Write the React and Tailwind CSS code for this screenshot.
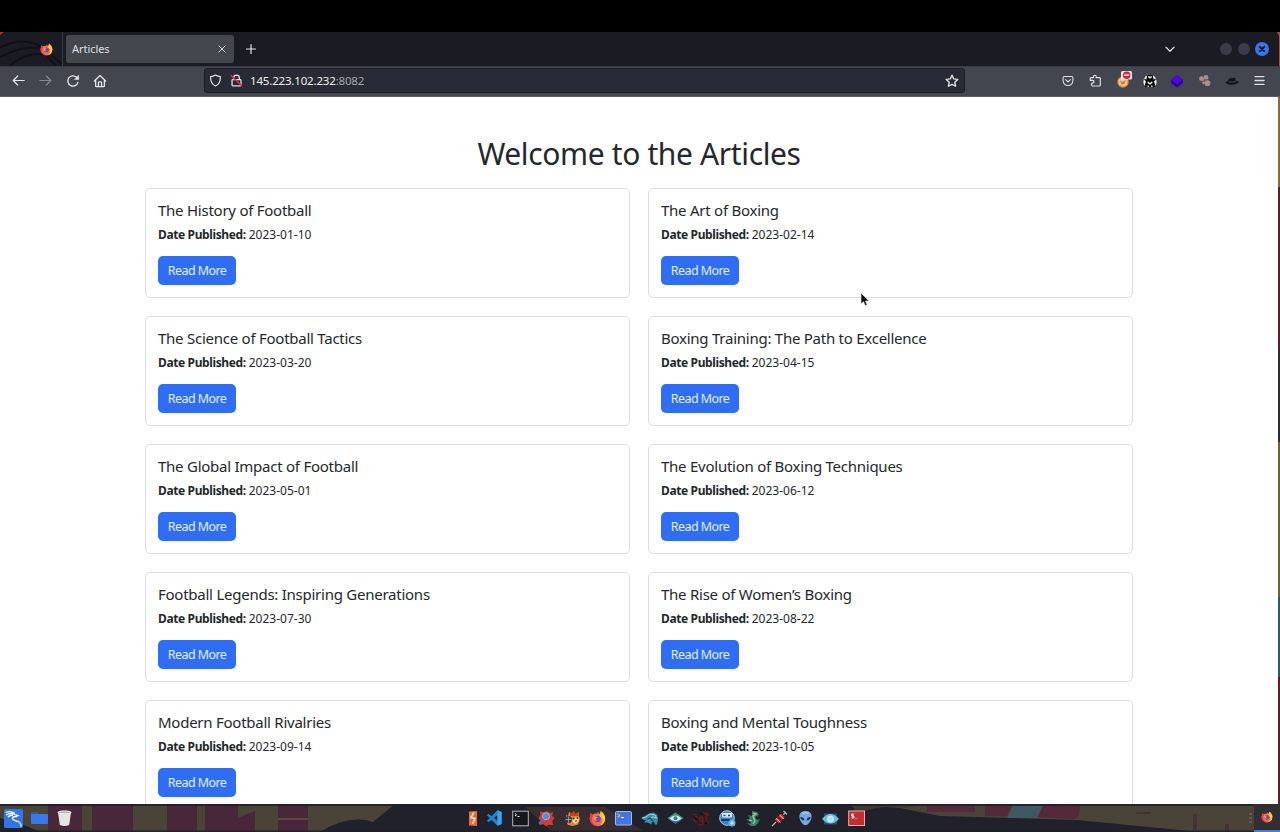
import React from "react";

const articles = [
  ["The History of Football", "2023-01-10"],
  ["The Art of Boxing", "2023-02-14"],
  ["The Science of Football Tactics", "2023-03-20"],
  ["Boxing Training: The Path to Excellence", "2023-04-15"],
  ["The Global Impact of Football", "2023-05-01"],
  ["The Evolution of Boxing Techniques", "2023-06-12"],
  ["Football Legends: Inspiring Generations", "2023-07-30"],
  ["The Rise of Women’s Boxing", "2023-08-22"],
  ["Modern Football Rivalries", "2023-09-14"],
  ["Boxing and Mental Toughness", "2023-10-05"],
];

function Firefox({ className }) {
  return (
    <svg viewBox="0 0 16 16" className={className}>
      <path d="M8 1.4c1 .9 1.5 1.6 1.8 2.5 1-.2 1.3-1.600.9-2.900 2.700 1.300 4.600 4.300 4.500 7.200A7.200 7.200 0 1 1 1.300 5.200L1.800 2.900l1.600 1.500C4.500 3.600 6 3 8 3.500z" fill="#ff7139" />
      <path d="M10.700 1c2.700 1.300 4.600 4.300 4.500 7.200a7.200 7.200 0 0 1-5 6.700C13 12.500 13 9.500 11.700 7.500 11 6 9.500 5.500 9.800 3.900c1-.2 1.300-1.600.9-2.900z" fill="#ffc83d" />
      <path d="M1.200 5.300A7.200 7.200 0 0 0 10 15c-3-.2-6.500-1.700-7.200-5-.4-2 .2-3.500 1.200-4.600L1.800 2.900z" fill="#f0355b" />
      <circle cx="7.900" cy="8.500" r="3.100" fill="#6a45c9" />
      <path d="M4.500 6.200c1.700-.5 2.900.2 4 .6-.8.400-1.600.4-2 1.300-.3 1 .4 1.700 1.500 1.900-2 .9-4-.8-3.500-3.800z" fill="#ff9a3b" />
    </svg>
  );
}

const line = { fill: "none", stroke: "currentColor", strokeLinecap: "round", strokeLinejoin: "round" };

function LineIcon({ d, className, width = 1.3 }) {
  return (
    <svg viewBox="0 0 16 16" className={className} {...line} strokeWidth={width}>
      <path d={d} />
    </svg>
  );
}

function TabBar() {
  return (
    <div className="relative flex h-[34px] items-center bg-[#1b1c23]">
      <div className="relative flex h-full w-[63px] items-center justify-end overflow-hidden border-r border-[#3a3b42] pr-[9.500px]">
        <svg viewBox="0 0 62 34" className="absolute inset-0 h-full w-full" fill="none" stroke="#101116" strokeWidth="2">
          <path d="M0 15C15 8 28 8 40 14L62 32M0 25C18 16 30 14 42 17M10 34C20 24 35 20 44 23M36 12L56 34" />
          <path d="M0 0H4L0 3Z" fill="#b33126" stroke="none" />
        </svg>
        <Firefox className="relative h-[13px] w-[13px]" />
      </div>
      <div className="ml-[3px] flex h-7 w-[168px] items-center justify-between rounded-[3px] bg-[#45474f] pr-[7px] pl-[6px]">
        <span className="font-['Noto_Sans',sans-serif] text-[11px] tracking-[-0.05px] text-[#dedfe2]">Articles</span>
        <LineIcon className="h-[10px] w-[10px] text-[#d0d1d5]" width={1.6} d="M3 3l10 10M13 3L3 13" />
      </div>
      <LineIcon className="ml-[11px] h-3 w-3 text-[#e4e4e8]" width={1.6} d="M8 2v12M2 8h12" />
      <LineIcon className="ml-auto h-3 w-3 text-[#e4e4e8]" width={1.7} d="M2.500 5.500L8 11l5.500-5.500" />
      <div className="ml-[44px] flex items-center gap-[6px] pr-[11.500px]">
        <i className="block h-3 w-3 rounded-full bg-[#3a3c4a]" />
        <i className="block h-3 w-3 rounded-full bg-[#3a3c4a]" />
        <svg viewBox="0 0 14 14" className="-ml-[1px] h-[14px] w-[14px]">
          <circle cx="7" cy="7" r="7" fill="#3a74ee" />
          <path d="M4.800 4.800l4.400 4.400M9.200 4.800L4.800 9.200" stroke="#10131f" strokeWidth="1.900" strokeLinecap="round" />
        </svg>
      </div>
      <svg viewBox="0 0 3 34" className="absolute top-0 right-0 h-full w-[3px]">
        <path d="M0 0H3V34H2V4Z" fill="#b24a3e" />
      </svg>
    </div>
  );
}

function Extensions() {
  return (
    <div className="flex items-center text-[#dfe0e4]">
      <svg viewBox="0 0 16 16" className="h-[12px] w-[12px]" {...line} strokeWidth="1.400">
        <path d="M3 2h10a1.500 1.500 0 0 1 1.500 1.500v4a6.500 6.500 0 0 1-13 0v-4A1.500 1.500 0 0 1 3 2zM4.800 6.200L8 9.300l3.200-3.100" />
      </svg>
      <svg viewBox="0 0 16 16" className="ml-[15px] h-[13px] w-[13px]" {...line} strokeWidth="1.400">
        <path d="M5.500 4.500V3.300a1.700 1.700 0 0 1 3.400 0v1.200h4a1 1 0 0 1 1 1v8.200a1 1 0 0 1-1 1H4.200a1 1 0 0 1-1-1v-2.600h1.300a1.600 1.600 0 0 0 0-3.200H1.600V5.500a1 1 0 0 1 1-1z" />
      </svg>
      <svg viewBox="0 0 16 18" className="-mt-[2px] ml-[14px] h-[18px] w-4">
        <circle cx="7" cy="11" r="5.800" fill="#c98c52" />
        <path d="M2.500 9l4-3.500 5 3.500-.5 5-4 1.500-4-2z" fill="#f0c98a" />
        <path d="M4 9.500l2.500 1.500L10 9l-1.500 4-3 .5z" fill="#cf7e38" />
        <rect x="5" y="0" width="11" height="8.500" rx="1.500" fill="#f2e7ea" />
        <circle cx="10.700" cy="4.200" r="3.800" fill="#c92843" />
        <path d="M8.300 4.200h4.800" stroke="#fff" strokeWidth="1.500" />
      </svg>
      <svg viewBox="0 0 14 14" className="ml-[11px] h-[14px] w-[14px]">
        <path d="M4.500 1.200C1.200 2.500-.3 6.500.8 10.300L3 13l1-3.500zM9.500 1.200c3.300 1.300 4.800 5.300 3.700 9.100L11 13l-1-3.500z" fill="#f0f0f2" />
        <path d="M4.500 1h5l1 3.500L12 13H2l1.500-8.500z" fill="#08090b" />
        <path d="M5.300 1.700l1.700 1 1.700-1v1.900L7 4.800 5.300 3.600zM4.500 7L7 9l2.500-2v2L7 10.800 4.500 9zM4.500 11.500h1.300V13H4.500zM8.200 11.500h1.300V13H8.200z" fill="#eeeeef" />
        <path d="M1.500 5L4 7.500 2.500 11M12.500 5L10 7.500l1.500 3.500" stroke="#060607" strokeWidth="1.200" fill="none" />
      </svg>
      <svg viewBox="0 0 14 14" className="ml-[13px] h-[14px] w-[14px]">
        <path d="M7 1l6 5v3l-6 4.500L1 9V6z" fill="#2a05a0" />
        <path d="M7 1l6 5-6 4.200L1 6z" fill="#4c0bd0" />
      </svg>
      <svg viewBox="0 0 14 14" className="ml-[14px] h-[13px] w-[13px]">
        <path d="M4 4.500l5.500 5.500M9.600 4v6" stroke="#76585f" strokeWidth="3" />
        <g fill="#a78c91"><circle cx="3.800" cy="5" r="2.600" /><circle cx="8.600" cy="3.500" r="2.500" /><circle cx="10.200" cy="10" r="3.200" /><circle cx="6" cy="9.500" r="1.500" /></g>
      </svg>
      <svg viewBox="0 0 14 14" className="ml-[14px] h-[14px] w-[14px]">
        <path d="M.3 8.500C1.500 7.500 3 7.600 3.700 5.200 4.200 3.500 5.500 4.300 7 3.900c1.500-.3 3-.7 3.300 1.200l.4 1.900c1.500-.3 2.800.3 3.100 1.300-2.500 3-10.300 3.500-13.500.2z" fill="#131417" />
        <path d="M3.600 7.300c2 1.200 5 1.200 7.200-.2" stroke="#55575e" strokeWidth=".8" fill="none" />
      </svg>
      <LineIcon className="ml-[14px] h-[13px] w-[13px]" width={1.7} d="M2.500 3.200h11M2.500 8h11M2.500 12.800h11" />
    </div>
  );
}

function NavBar() {
  return (
    <div className="flex h-[31px] items-center border-t border-b border-t-[#383a42] border-b-[#5b5d64] bg-[#43464f] pr-[14px] pb-[2px] pl-[12px]">
      <div className="flex w-[192px] items-center text-[#e6e6e9]">
        <LineIcon className="h-[13px] w-[13px]" width={1.500} d="M15 8H1.500M7 2.500L1.500 8 7 13.500" />
        <LineIcon className="ml-[14px] h-[13px] w-[13px] text-[#85878e]" width={1.500} d="M1 8h13.500M9 2.500L14.500 8 9 13.500" />
        <svg viewBox="0 0 16 16" className="ml-[14px] h-[14px] w-[14px]" {...line} strokeWidth="1.500">
          <path d="M13.700 9.500a5.900 5.900 0 1 1-1.500-5.700L14 5.500" />
          <path d="M14.500 1.500v4.800H9.700z" fill="currentColor" strokeWidth=".5" />
        </svg>
        <svg viewBox="0 0 16 16" className="ml-[13px] h-[14px] w-[14px]" {...line} strokeWidth="1.500">
          <path d="M1.500 8L8 1.800 14.500 8M3 7v6.500a1 1 0 0 0 1 1h8a1 1 0 0 0 1-1V7M6.200 14.300V10a1 1 0 0 1 1-1h1.600a1 1 0 0 1 1 1v4.300" />
        </svg>
      </div>
      <div className="flex h-[25px] w-[761px] items-center rounded-[3px] border border-[#1b1c24] bg-[#282a35] pr-[5px] pl-[4px] text-[#dfe0e4]">
        <LineIcon className="h-[13px] w-[13px]" width={1.500} d="M8 1.200c2 1.300 4 1.900 6 2 .3 5.500-1.600 9.500-6 11.600-4.400-2.100-6.300-6.100-6-11.600 2-.1 4-.7 6-2z" />
        <svg viewBox="0 0 16 16" className="ml-2 h-[13px] w-[13px]" {...line} strokeWidth="1.600">
          <path d="M4.500 7V5a3.500 3.500 0 0 1 7 0v2M3.500 7h9a1 1 0 0 1 1 1v5.500a1 1 0 0 1-1 1h-9a1 1 0 0 1-1-1V8a1 1 0 0 1 1-1z" />
          <path d="M1.500 2l13 12.500" stroke="#e22850" strokeWidth="1.900" />
        </svg>
        <span className="ml-[7px] font-['Noto_Sans',sans-serif] text-[11.500px] tracking-[-0.170px] text-[#f0f0f2]">
          145.223.102.232<span className="text-[#a4a6ac]">:8082</span>
        </span>
        <LineIcon className="ml-auto h-[14px] w-[14px]" width={1.600} d="M8 1.400l2 4.200 4.600.6-3.400 3.200.9 4.600L8 11.800 3.900 14l.9-4.600L1.400 6.200 6 5.600z" />
      </div>
      <div className="ml-auto"><Extensions /></div>
    </div>
  );
}

function Card({ title, date }) {
  return (
    <article className="h-[110px] rounded-[5px] border border-[#dcdddf] bg-white px-[12px] pt-[11px]">
      <h2 className="text-[15px] leading-[20px] tracking-[-0.250px] whitespace-nowrap">{title}</h2>
      <p className="mt-[6px] flex gap-[3px] text-[12px] leading-[18px] whitespace-nowrap">
        <strong className="font-bold tracking-[-0.380px]">Date Published:</strong> <span>{date}</span>
      </p>
      <button className="mt-[12px] flex h-[29px] w-[78px] items-center justify-center rounded-[5px] bg-[#2f6df3] pt-px text-[12.500px] tracking-[-0.580px] text-[#e6eefe]">
        Read More
      </button>
    </article>
  );
}

function VsCode() {
  return (
    <svg viewBox="0 0 16 16" className="h-4 w-4">
      <path d="M11.500.3L15.600 2v12l-4.100 1.700L1 5.200l1.500-1.400 9 6.900V5.300l-9 6.900L1 10.800z" fill="#2383cf" />
      <path d="M11.500.3L15.600 2v12l-4.100 1.700z" fill="#35a5ef" />
    </svg>
  );
}

function Dock() {
  const s = "h-[17px] w-[17px]";
  return (
    <div className="flex items-center gap-[8.900px]">
      <svg viewBox="0 0 17 17" className="-mr-[3.500px] h-[17px] w-[17px]">
        <path d="M5 1.500l8-.5v15l-8-.5z" fill="#ee6b32" />
        <path d="M9.800 2.500L7 7.500l4 1L8.500 14" stroke="#fff" strokeWidth="1.300" fill="none" />
      </svg>
      <div className="flex w-[17px] justify-center"><VsCode /></div>
      <svg viewBox="0 0 17 17" className={s}>
        <rect x=".7" y="1.200" width="15.600" height="14.600" fill="#17181b" stroke="#b4b6ba" />
        <path d="M3 3.500l1.500 1.300L3 6M5.500 6.500h2" stroke="#fff" fill="none" />
      </svg>
      <svg viewBox="0 0 17 17" className={s}>
        <path d="M2 1.500l4 .8L9 1l3 2 3-1-.8 4 2.300 2-2.200 3 .7 4-4-.3L8 16l-3-1.700-3.500 1L2.500 11 .5 8l2-3z" fill="#d43c32" />
        <circle cx="8" cy="6.300" r="3.500" fill="#5a86d8" stroke="#a3b6dd" />
        <path d="M5.500 9L1 13.500" stroke="#4372cc" strokeWidth="2" />
      </svg>
      <svg viewBox="0 0 17 17" className={s}>
        <path d="M2 5l2 1 1-4 3 2 1.500-3 2 3L15 2l-.2 4 1.200 3-2 5.500-5 1.500-5-1-2-4z" fill="#e8862e" />
        <path d="M6 2l2 2 1.500-3 2 3L15 2l-1 4H6z" fill="#cf3929" />
        <path d="M10 8l5-1-.5 5-3.500 2-3-3z" fill="#f7d7a0" />
        <circle cx="4.500" cy="9.500" r="3.500" fill="#323843" /><path d="M1.500 9.500h6M4.500 6.500v6" stroke="#a9b1ba" strokeWidth=".8" />
        <circle cx="9.700" cy="8.500" r=".9" fill="#33211d" /><circle cx="13.500" cy="8" r=".9" fill="#33211d" /><path d="M11 11h2" stroke="#4c271c" />
      </svg>
      <Firefox className={s} />
      <svg viewBox="0 0 17 17" className={s}>
        <rect x=".5" y="1.500" width="16" height="13.500" rx="1" fill="#4674df" stroke="#9db9f3" />
        <path d="M2.800 4l2 1.500-2 1.500M6 7.500h3" stroke="#fff" fill="none" />
      </svg>
      <svg viewBox="0 0 17 17" className={s}>
        <path d="M0 8l4-2 3-2 5-1.500 4 2 1 4-1 6h-2l-1-3-2 1-1 2-3-2H3l2-2-3-1z" fill="#3f8eab" />
        <path d="M1 8l4-1 4-3 5 1 1.500 3-3-1-3 1-3 3" stroke="#9bd4df" fill="none" /><path d="M6 10l3-2 3 3" stroke="#15455f" fill="none" strokeWidth="1.300" />
      </svg>
      <svg viewBox="0 0 17 17" className={s}>
        <path d="M.5 8.500L8.500 14l8-5.500-8-2z" fill="#3c68b5" /><path d="M.5 8L8.500 2.500l8 5.500-8 3.500z" fill="#3a9b7b" />
        <path d="M2.500 8.500q6-6 12 0-6 5-12 0z" fill="#dcebe6" /><circle cx="8.500" cy="8.300" r="2" fill="#3c7c92" />
      </svg>
      <svg viewBox="0 0 17 17" className={s} fill="none" stroke="#711719" strokeWidth="1.700">
        <path d="M.5 4l3 1M5 7c-4-1-6 5-1 5M9.800 7c-4-1-4 5 0 4V7v7c-1 1.500-4 1.200-4 0M13.500 2v9.500L16 13M10 3l6 2" />
        <path d="M1 7l3 3M8 3l2 2M12 14l2-2" stroke="#111217" />
      </svg>
      <svg viewBox="0 0 17 17" className={s}>
        <circle cx="8" cy="8" r="7.300" fill="#3383c6" stroke="#a9cde8" />
        <rect x="3" y="3" width="10" height="4.500" rx="1" fill="#d9edf8" /><path d="M4.500 5.500h2M9 5.500h2" stroke="#173e77" strokeWidth="1.500" />
        <path d="M2 10h9" stroke="#133975" strokeWidth="2" /><circle cx="13" cy="13" r="3.500" fill="#68b3e6" /><path d="M11.500 13h3M13 11.500v3" stroke="#e4f5ff" />
      </svg>
      <svg viewBox="0 0 17 17" className={s}>
        <path d="M7 1l5 1 2 3-4 2 2 3 3-1-2 4-3 3H6l-4-3 4 .5-1-2-4-2 4-.5L3 5l4 1z" fill="#3e8067" />
        <path d="M8 3l3 1-3 2 2 5-2 3M4 10l3 1" stroke="#9ccaa3" strokeWidth="1.300" fill="none" /><path d="M12 7l2-3M5 7L3 6" stroke="#275449" />
      </svg>
      <svg viewBox="0 0 17 17" className={s}>
        <path d="M1 16l4.500-4.500M11.500 5.500L15 2M12.500 1l3.500 3.500" stroke="#b5b2b5" strokeWidth="1.300" />
        <path d="M3 9.500l7-6.500L14.500 7l-7 7z" fill="#c52930" stroke="#291b20" /><path d="M5 8.500l4.500 4M8.500 5l4.500 4" stroke="#e8cdd0" /><path d="M7 7l3 3" stroke="#2b1a1e" strokeWidth="1.500" />
      </svg>
      <svg viewBox="0 0 17 17" className={s}>
        <path d="M8.500 1c8 0 7 8 3.500 12-2.500 3-4.500 3-7 0C1.500 9 .5 1 8.500 1z" fill="#78a9dc" />
        <path d="M3.300 7c3 0 4 1.500 4 3.500-2.500 0-3.700-1.300-4-3.500zM13.700 7c-3 0-4 1.500-4 3.500 2.500 0 3.700-1.300 4-3.500z" fill="#172c61" />
        <path d="M5.500 3.500q3-2 6 0" stroke="#bcdaf5" fill="none" />
      </svg>
      <svg viewBox="0 0 17 17" className={s}>
        <rect x="2" y="3.500" width="13" height="11" rx="1" fill="#225677" /><path d="M0 9q8.500-10 17 0-8.500 9-17 0z" fill="#6fbbe2" />
        <circle cx="8.500" cy="9" r="3.500" fill="#c5e9f8" /><circle cx="8.500" cy="9" r="1.600" fill="#a6d9f2" />
      </svg>
      <svg viewBox="0 0 17 17" className={s}>
        <rect x=".7" y="1" width="15.800" height="14.500" fill="#c72b2b" stroke="#ddb2af" />
        <path d="M6 4.200H3.500V6H6v1.800H3.300M4.700 3.500v5M7 8.500h2" stroke="#fff" strokeWidth=".8" fill="none" />
      </svg>
    </div>
  );
}

function Wallpaper() {
  return (
    <svg viewBox="0 0 1280 28" preserveAspectRatio="none" className="absolute inset-0 h-full w-full">
      <rect width="1280" height="28" fill="#494437" />
      <path d="M48 0H82V28H48ZM92 0H133V28H92ZM167 0H197V28H167ZM205 0H238V14L255 7V28H205ZM278 0H308V28H278Z" fill="#48273a" />
      <path d="M0 14Q24 20 40 28H0ZM320 28Q350 10 373 18L395 0H845L900 4L940 12L1077 16L1200 28Z" fill="#20212a" />
      <path d="M525 3L605 3 645 28H552Z" fill="#382e31" />
      <path d="M927 2H975V8H927ZM985 1H1012L1007 12H985ZM1042 1H1080Q1080 13 1075 15L1036 13Z" fill="#56293a" />
      <path d="M1013 2H1043L1037 14H1007Z" fill="#3e5963" />
      <path d="M1136 8h15v2h-15ZM1193 10h4v16h-4ZM1225 20h4v8h-4Z" fill="#46303a" />
      <path d="M278 14h30v2h-30Z" fill="#5a4a45" />
      <path d="M858 10Q880 0 905 4L925 0H850Z" fill="#3c3932" />
      <path d="M0 0H1280V2H0ZM0 26.500H1280V28H0Z" fill="#1e1f27" opacity=".85" />
    </svg>
  );
}

function Taskbar() {
  return (
    <footer className="relative h-7 overflow-hidden bg-[#20212a]">
      <Wallpaper />
      <div className="relative flex h-full items-center">
        <div className="flex w-[463.500px] items-center pl-[4px]">
          <svg viewBox="0 0 19 19" className="h-[19px] w-[19px]">
            <rect width="19" height="19" rx="1.500" fill="#3475e5" />
            <path d="M1.500 3.500q5-2 9 .6M2 6q5-3 9-.5l3 1-2 1q-5 0-3 3 2 1.500 5 2 3 1 3 5M4 8q2-2 5-2" stroke="#fff" strokeWidth="1.300" fill="none" />
          </svg>
          <svg viewBox="0 0 17 14" className="ml-[8px] h-[14px] w-[17px]">
            <path d="M0 2q0-1 1-1h5l1.500 2H16q1 0 1 1v8q0 1-1 1H1q-1 0-1-1z" fill="#3b77e6" /><path d="M0 2q0-1 1-1h5L7 3H0z" fill="#2857bc" />
          </svg>
          <svg viewBox="0 0 16 18" className="ml-[9px] h-[17px] w-[15px]">
            <path d="M1 2h14l-2 14q-5 2-10 0z" fill="#e5e4e4" /><ellipse cx="8" cy="2.500" rx="7" ry="1.600" fill="#b8b7b8" stroke="#f5f4f4" />
          </svg>
        </div>
        <Dock />
        <div className="flex h-full flex-1 items-center justify-end">
          <svg viewBox="0 0 3 10" className="mr-[2px] h-[10px] w-[3px]"><path d="M0 1h3M0 5h3M0 9h3" stroke="#777571" /></svg>
          <div className="flex h-full w-[26px] items-center justify-center border-b-2 border-[#397fe8] bg-[#303032]">
            <Firefox className="h-[12px] w-[12px]" />
          </div>
        </div>
      </div>
    </footer>
  );
}

export default function App() {
  return (
    <div className="relative flex h-[832px] w-[1280px] flex-col overflow-hidden bg-black pt-8 font-['Noto_Sans',sans-serif]">
      <TabBar />
      <NavBar />
      <div className="flex min-h-0 flex-1 overflow-hidden">
        <main className="w-[1278px] overflow-hidden bg-white text-[#24282d]">
          <h1 className="mt-[37px] text-center text-[30px] leading-[40px] tracking-[-0.370px]">Welcome to the Articles</h1>
          <section className="mt-[14px] ml-[145px] grid w-[988px] grid-cols-2 gap-[18px]">
            {articles.map(([title, date]) => <Card key={title} title={title} date={date} />)}
          </section>
        </main>
        <div className="flex w-[2px] flex-col">
          <i className="h-[90px] bg-[#8f692f]" />
          <i className="h-[160px] bg-[#5b1f25]" />
          <i className="h-[95px] bg-[#2c2b37]" />
          <i className="h-[155px] bg-[#6e632f]" />
          <i className="h-[80px] bg-[#2e5966]" />
          <i className="flex-1 bg-[#5b1f25]" />
        </div>
      </div>
      <Taskbar />
      <svg viewBox="0 0 10 15" className="absolute top-[292px] left-[860px] h-[15px] w-[10px]">
        <path d="M1 1v11l2.500-2.300 1.700 4 2-.9-1.700-3.800H9z" fill="#111" stroke="#fff" strokeWidth=".6" />
      </svg>
    </div>
  );
}
